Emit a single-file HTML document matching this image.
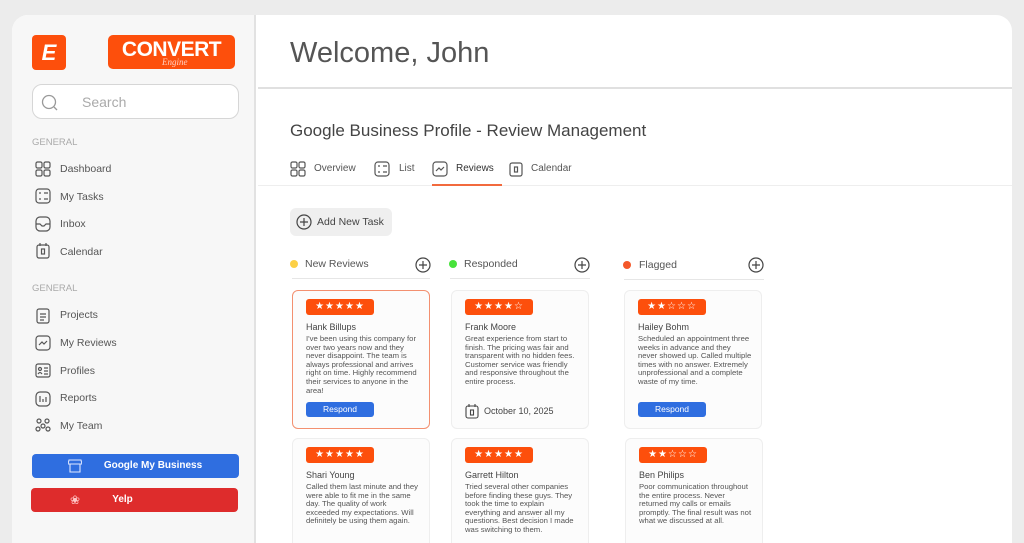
<!DOCTYPE html><html><head><meta charset="utf-8"><style>
*{margin:0;padding:0;box-sizing:border-box}
html,body{width:1024px;height:543px;overflow:hidden}
body{background:#ececec;font-family:"Liberation Sans","DejaVu Sans",sans-serif;position:relative;color:#444}
.a{position:absolute}
.win{left:12px;top:15px;width:1000px;height:528px;border-radius:16px 16px 0 0;background:#fff;overflow:hidden}
.side{left:0;top:0;width:244px;height:100%;background:#f7f7f7;border-right:2px solid #e2e2e2}
.nav{font-size:10.5px;color:#555}
.sec{font-size:9.5px;color:#aaa}
.card{width:138px;background:#fcfcfc;border:1px solid #eeeeee;border-radius:6px}
.stars{left:13px;top:8px;width:68px;height:16px;background:#fd4f0c;border-radius:3px;color:#fff;font-size:10px;line-height:16px;text-align:center;letter-spacing:1px}
.nm{left:13px;top:31px;font-size:9px;color:#444}
.tx{left:13px;top:44px;width:114px;font-size:7.7px;line-height:8.6px;color:#555}
.btn{left:13px;top:111px;width:68px;height:15px;background:#2f6ee0;border-radius:3px;color:#fff;font-size:8.5px;line-height:15px;text-align:center}
svg{position:absolute}
</style></head><body>
<div class="a win">
 <div class="a side">
  <div class="a" style="left:20px;top:20px;width:34px;height:35px;background:#fd4f0c;border-radius:4px;color:#fff;font:italic bold 22px 'Liberation Sans';text-align:center;line-height:35px">E</div>
  <div class="a" style="left:96px;top:20px;width:127px;height:34px;background:#fd4f0c;border-radius:5px;color:#fff;font:bold 21px 'Liberation Sans';text-align:center;line-height:30px;letter-spacing:-0.5px">CONVERT</div>
  <div class="a" style="left:150px;top:42px;color:#ffd0c0;font:italic 9px 'Liberation Serif'">Engine</div>
  <div class="a" style="left:20px;top:69px;width:207px;height:35px;border:1px solid #d6d6d6;border-radius:10px;background:#fff"></div>
  <svg style="left:29px;top:79px" width="18" height="18"><circle cx="8" cy="8" r="6.5" fill="none" stroke="#999" stroke-width="1.3"/><path d="M13 13l3 3" stroke="#999" stroke-width="1.3"/></svg>
  <div class="a" style="left:70px;top:79px;font-size:14px;color:#aaa">Search</div>
  <div class="a sec" style="left:20px;top:122px">GENERAL</div>
  <div class="a nav" style="left:48px;top:148px">Dashboard</div>
  <div class="a nav" style="left:48px;top:176px">My Tasks</div>
  <div class="a nav" style="left:48px;top:203px">Inbox</div>
  <div class="a nav" style="left:48px;top:231px">Calendar</div>
  <div class="a sec" style="left:20px;top:268px">GENERAL</div>
  <div class="a nav" style="left:48px;top:294px">Projects</div>
  <div class="a nav" style="left:48px;top:322px">My Reviews</div>
  <div class="a nav" style="left:48px;top:350px">Profiles</div>
  <div class="a nav" style="left:48px;top:377px">Reports</div>
  <div class="a nav" style="left:48px;top:405px">My Team</div>
  <svg style="left:23px;top:146px" width="18" height="300" fill="none" stroke="#555" stroke-width="1.2">
   <rect x="1" y="1" width="6" height="6" rx="1.5"/><rect x="9" y="1" width="6" height="6" rx="1.5"/><rect x="1" y="9" width="6" height="6" rx="1.5"/><rect x="9" y="9" width="6" height="6" rx="1.5"/>
   <rect x="1" y="28" width="14" height="14" rx="3"/><path d="M4 32h2M9 32h4M4 38h2M9 38h4"/>
   <rect x="1" y="56" width="14" height="14" rx="4"/><path d="M1 63h4l2 2h2l2-2h4"/>
   <rect x="2" y="84" width="12" height="13" rx="2"/><path d="M5 82v3M11 82v3"/><rect x="6.5" y="88" width="3" height="5"/>
   <rect x="2" y="148" width="12" height="14" rx="2"/><path d="M5 153h6M5 156h6M5 159h4"/>
   <rect x="1" y="175" width="14" height="14" rx="3"/><path d="M4 184l3-3 2 2 3-3"/>
   <rect x="1" y="203" width="14" height="13" rx="2"/><circle cx="5" cy="208" r="1.5"/><path d="M3 213q2-3 4 0M9 207h4M9 210h4M9 213h4"/>
   <rect x="1" y="231" width="14" height="14" rx="4"/><path d="M5 235v6M8 238v3M11 236v5"/>
   <circle cx="4" cy="260" r="2"/><circle cx="12" cy="260" r="2"/><circle cx="8" cy="265" r="2"/><circle cx="3" cy="268" r="2"/><circle cx="13" cy="268" r="2"/>
  </svg>
  <div class="a" style="left:20px;top:439px;width:207px;height:24px;background:#2f6ee0;border-radius:4px;color:#fff;font-size:10px;font-weight:bold;text-align:center;line-height:24px;padding-left:35px">Google My Business</div>
  <svg style="left:56px;top:444px" width="14" height="14" fill="none" stroke="#dfe8ff" stroke-width="1.1"><path d="M1 1h12l1 4H0zM2 5v8h10V5"/></svg>
  <div class="a" style="left:19px;top:473px;width:207px;height:24px;background:#de2c2c;border-radius:4px;color:#fff;font-size:10px;font-weight:bold;text-align:center;line-height:24px;padding-right:24px">Yelp</div>
  <div class="a" style="left:58px;top:478px;color:#ffc8c8;font-size:12px">❀</div>
 </div>
 <div class="a" style="left:278px;top:22px;font-size:29px;color:#555;font-weight:300">Welcome, John</div>
 <div class="a" style="left:246px;top:72px;width:754px;height:2px;background:#e0e0e0"></div>
 <div class="a" style="left:278px;top:106px;font-size:17px;color:#444">Google Business Profile - Review Management</div>
 <svg style="left:278px;top:146px" width="240" height="18" fill="none" stroke="#555" stroke-width="1.2">
  <rect x="1" y="1" width="6" height="6" rx="1.5"/><rect x="9" y="1" width="6" height="6" rx="1.5"/><rect x="1" y="9" width="6" height="6" rx="1.5"/><rect x="9" y="9" width="6" height="6" rx="1.5"/>
  <rect x="85" y="1" width="14" height="14" rx="3"/><path d="M88 5h2M93 5h4M88 11h2M93 11h4"/>
  <rect x="143" y="1" width="14" height="14" rx="3"/><path d="M146 10l3-3 2 2 3-3"/>
  <rect x="220" y="2" width="12" height="13" rx="2"/><rect x="224.5" y="6" width="3" height="5"/>
 </svg>
 <div class="a nav" style="left:302px;top:148px;font-size:10px">Overview</div>
 <div class="a nav" style="left:387px;top:148px;font-size:10px">List</div>
 <div class="a nav" style="left:444px;top:148px;font-size:10px;color:#333">Reviews</div>
 <div class="a nav" style="left:519px;top:148px;font-size:10px">Calendar</div>
 <div class="a" style="left:246px;top:170px;width:754px;height:1px;background:#eee"></div>
 <div class="a" style="left:420px;top:169px;width:70px;height:2px;background:#f26a3d"></div>
 <div class="a" style="left:278px;top:193px;width:102px;height:28px;background:#efefef;border-radius:6px"></div>
 <svg style="left:284px;top:199px" width="16" height="16" fill="none" stroke="#444" stroke-width="1.2"><circle cx="8" cy="8" r="7"/><path d="M8 4v8M4 8h8"/></svg>
 <div class="a nav" style="left:305px;top:201px;font-size:10.5px;color:#444">Add New Task</div>
 <div class="a" style="left:278px;top:245px;width:8px;height:8px;border-radius:50%;background:#fcd046"></div>
 <div class="a nav" style="left:293px;top:243px;font-size:10.5px">New Reviews</div>
 <div class="a" style="left:437px;top:245px;width:8px;height:8px;border-radius:50%;background:#47e23b"></div>
 <div class="a nav" style="left:452px;top:243px;font-size:10.5px">Responded</div>
 <div class="a" style="left:611px;top:246px;width:8px;height:8px;border-radius:50%;background:#f4582a"></div>
 <div class="a nav" style="left:627px;top:244px;font-size:10.5px">Flagged</div>
 <svg style="left:402px;top:241px" width="360" height="18" fill="none" stroke="#444" stroke-width="1.2"><circle cx="9" cy="9" r="7"/><path d="M9 5v8M5 9h8"/><circle cx="168" cy="9" r="7"/><path d="M168 5v8M164 9h8"/><circle cx="342" cy="9" r="7"/><path d="M342 5v8M338 9h8"/></svg>
 <div class="a" style="left:280px;top:263px;width:138px;height:1px;background:#e6e6e6"></div>
 <div class="a" style="left:438px;top:263px;width:140px;height:1px;background:#e6e6e6"></div>
 <div class="a" style="left:612px;top:264px;width:140px;height:1px;background:#e6e6e6"></div>

 <div class="a card" style="left:280px;top:275px;height:139px;border-color:#f39070"><div class="a stars">★★★★★</div><div class="a nm">Hank Billups</div><div class="a tx">I've been using this company for over two years now and they never disappoint. The team is always professional and arrives right on time. Highly recommend their services to anyone in the area!</div><div class="a btn">Respond</div></div>
 <div class="a card" style="left:439px;top:275px;height:139px"><div class="a stars">★★★★☆</div><div class="a nm">Frank Moore</div><div class="a tx">Great experience from start to finish. The pricing was fair and transparent with no hidden fees. Customer service was friendly and responsive throughout the entire process.</div>
  <svg style="left:13px;top:113px" width="14" height="15" fill="none" stroke="#444" stroke-width="1.1"><rect x="1" y="2" width="12" height="12" rx="2"/><path d="M4 0v3M10 0v3"/><rect x="5.5" y="6" width="3" height="5"/></svg>
  <div class="a" style="left:32px;top:115px;font-size:9px;color:#444">October 10, 2025</div></div>
 <div class="a card" style="left:612px;top:275px;height:139px"><div class="a stars">★★☆☆☆</div><div class="a nm">Hailey Bohm</div><div class="a tx">Scheduled an appointment three weeks in advance and they never showed up. Called multiple times with no answer. Extremely unprofessional and a complete waste of my time.</div><div class="a btn">Respond</div></div>

 <div class="a card" style="left:280px;top:423px;height:139px"><div class="a stars">★★★★★</div><div class="a nm">Shari Young</div><div class="a tx">Called them last minute and they were able to fit me in the same day. The quality of work exceeded my expectations. Will definitely be using them again.</div></div>
 <div class="a card" style="left:439px;top:423px;height:139px"><div class="a stars">★★★★★</div><div class="a nm">Garrett Hilton</div><div class="a tx">Tried several other companies before finding these guys. They took the time to explain everything and answer all my questions. Best decision I made was switching to them.</div></div>
 <div class="a card" style="left:613px;top:423px;height:139px"><div class="a stars">★★☆☆☆</div><div class="a nm">Ben Philips</div><div class="a tx">Poor communication throughout the entire process. Never returned my calls or emails promptly. The final result was not what we discussed at all.</div></div>
</div>
</body></html>
